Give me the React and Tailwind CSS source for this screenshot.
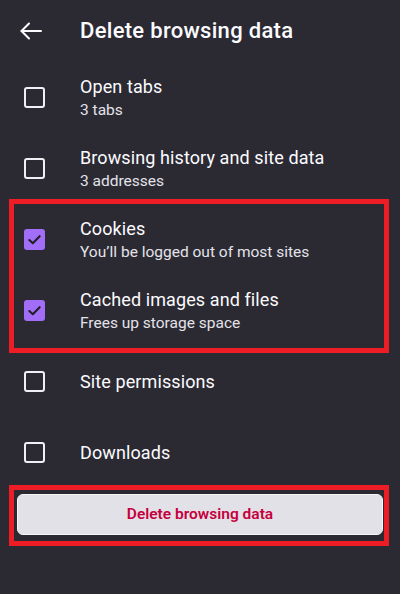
import React from 'react';

const ITEMS = [
  { title: 'Open tabs', sub: '3 tabs', checked: false },
  { title: 'Browsing history and site data', sub: '3 addresses', checked: false },
  { title: 'Cookies', sub: 'You’ll be logged out of most sites', checked: true },
  { title: 'Cached images and files', sub: 'Frees up storage space', checked: true },
  { title: 'Site permissions', checked: false },
  { title: 'Downloads', checked: false },
];

function Box({ checked }) {
  if (checked) {
    return (
      <div className="w-[21px] h-[21px] rounded-[3px] bg-[#a36ef7] flex items-center justify-center">
        <svg width="15" height="15" viewBox="0 0 16 16" fill="none">
          <path d="M2.5 8.5 L6.2 12 L13.5 4.5" stroke="#1f1e25" strokeWidth="2.2" strokeLinecap="round" strokeLinejoin="round" />
        </svg>
      </div>
    );
  }
  return <div className="w-[21px] h-[21px] rounded-[3px] border-2 border-[#f0f0f4]" />;
}

export default function App() {
  return (
    <div className="relative w-[400px] h-[594px] bg-[#2b2a33] text-[#fbfbfe] overflow-hidden"
      style={{ fontFamily: 'Roboto, "Noto Sans", sans-serif' }}>

      {/* Header */}
      <div className="h-[62px] flex items-center">
        <div className="w-[80px] pl-[19px] flex items-center">
          <svg width="24" height="24" viewBox="0 0 24 24" fill="none" stroke="#fbfbfe" strokeWidth="2" strokeLinecap="round" strokeLinejoin="round">
            <path d="M22 12 H2.5" />
            <path d="M10 4.5 L2.5 12 L10 19.5" />
          </svg>
        </div>
        <h1 className="text-[22px] font-medium tracking-[0.3px] -mt-[1px]">Delete browsing data</h1>
      </div>

      {/* Items */}
      {ITEMS.map((it, i) => (
        <div key={i} className="h-[71px] flex items-center">
          <div className="w-[80px] pl-[24px]">
            <Box checked={it.checked} />
          </div>
          <div className="flex flex-col">
            <span className="text-[18px] leading-[22px] tracking-[0.1px]">{it.title}</span>
            {it.sub && <span className="text-[15.5px] leading-[20px] mt-[2px] text-[#e4e3ea]">{it.sub}</span>}
          </div>
        </div>
      ))}

      {/* Delete button */}
      <div className="px-[17px] pt-[6px]">
        <button className="w-full h-[41px] rounded-[6px] bg-[#e2e1e7] border border-[#f6f6f9] text-[#c5003e] text-[15.5px] font-semibold">
          Delete browsing data
        </button>
      </div>

      {/* Annotation frames */}
      <div className="absolute left-[9px] top-[199px] w-[380px] h-[154px] border-[5px] border-[#ee1c25]" />
      <div className="absolute left-[9px] top-[485px] w-[380px] h-[61px] border-[5px] border-[#ee1c25]" />
    </div>
  );
}
